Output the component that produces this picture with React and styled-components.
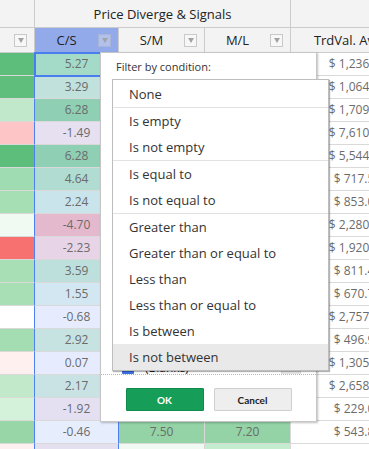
import styled, { createGlobalStyle } from 'styled-components';

const GlobalStyle = createGlobalStyle`
  html, body {
    margin: 0;
    padding: 0;
    background: #fff;
  }
  body {
    font-family: "Open Sans", "Noto Sans", sans-serif;
  }
`;

const rows = [
  { lead: '#5dbd7a', cs: '5.27', csBg: '#a4dbc8', sm: '6.10', smBg: '#a4dcb4', ml: '5.90', mlBg: '#a9dfb8', trd: '$ 1,236.54' },
  { lead: '#5fbe7c', cs: '3.29', csBg: '#c1e1dd', sm: '4.20', smBg: '#c2e8cc', ml: '3.80', mlBg: '#c2e8cc', trd: '$ 1,064.27' },
  { lead: '#c2e8cc', cs: '6.28', csBg: '#8fcfb3', sm: '5.40', smBg: '#a9dfb8', ml: '6.70', mlBg: '#99d6a8', trd: '$ 1,709.81' },
  { lead: '#fdc5c5', cs: '-1.49', csBg: '#e6e0f1', sm: '-0.80', smBg: '#fde3e3', ml: '-1.10', mlBg: '#fdd6d6', trd: '$ 7,610.32' },
  { lead: '#5dbd7a', cs: '6.28', csBg: '#8fcfb3', sm: '7.10', smBg: '#98d6a8', ml: '6.90', mlBg: '#99d6a8', trd: '$ 5,544.09' },
  { lead: '#9fdcb1', cs: '4.64', csBg: '#b0dcd1', sm: '3.90', smBg: '#c2e8cc', ml: '4.40', mlBg: '#b5e3c1', trd: '$ 717.56' },
  { lead: '#a7dfb5', cs: '2.24', csBg: '#c9e4ea', sm: '2.80', smBg: '#d4f1da', ml: '2.10', mlBg: '#d4f1da', trd: '$ 853.02' },
  { lead: '#f0faf2', cs: '-4.70', csBg: '#e5b9cd', sm: '-3.60', smBg: '#fab4b4', ml: '-4.20', mlBg: '#f9a5a5', trd: '$ 2,280.44' },
  { lead: '#f87171', cs: '-2.23', csBg: '#e7d4e7', sm: '-1.90', smBg: '#fdd6d6', ml: '-2.50', mlBg: '#fcc9c9', trd: '$ 1,920.17' },
  { lead: '#a8dfb5', cs: '3.59', csBg: '#bee0dd', sm: '3.10', smBg: '#c2e8cc', ml: '3.40', mlBg: '#c2e8cc', trd: '$ 811.43' },
  { lead: '#a8dfb5', cs: '1.55', csBg: '#d3e7f2', sm: '1.20', smBg: '#e4f6e8', ml: '1.70', mlBg: '#dcf3e1', trd: '$ 670.71' },
  { lead: '#ffffff', cs: '-0.68', csBg: '#e6ecfd', sm: '-0.40', smBg: '#fff0f0', ml: '-0.90', mlBg: '#fde6e6', trd: '$ 2,757.60' },
  { lead: '#a5ddb3', cs: '2.92', csBg: '#c6e2e1', sm: '2.60', smBg: '#d4f1da', ml: '3.00', mlBg: '#c9ebd1', trd: '$ 496.95' },
  { lead: '#fff0f0', cs: '0.07', csBg: '#e6ecfd', sm: '0.30', smBg: '#f0faf2', ml: '0.10', mlBg: '#f7fcf8', trd: '$ 1,305.38' },
  { lead: '#c3e9cb', cs: '2.17', csBg: '#c9e3e5', sm: '2.40', smBg: '#d4f1da', ml: '1.90', mlBg: '#d4f1da', trd: '$ 2,658.12' },
  { lead: '#d4f1da', cs: '-1.92', csBg: '#e4e0f1', sm: '-1.30', smBg: '#fdd6d6', ml: '-1.60', mlBg: '#fdd6d6', trd: '$ 229.06' },
  { lead: '#98d6a8', cs: '-0.46', csBg: '#e6edfd', sm: '7.50', smBg: '#93d3a5', ml: '7.20', mlBg: '#93d3a5', trd: '$ 543.85' },
  { lead: '#fff0f0', cs: '-1.65', csBg: '#e4e0f0', sm: '0.40', smBg: '#f0faf3', ml: '2.90', mlBg: '#c4ecce', trd: '$ 388.20' },
];

const conditionGroups = [
  ['None'],
  ['Is empty', 'Is not empty'],
  ['Is equal to', 'Is not equal to'],
  [
    'Greater than',
    'Greater than or equal to',
    'Less than',
    'Less than or equal to',
    'Is between',
    'Is not between',
  ],
];

const Viewport = styled.div`
  position: relative;
  width: 369px;
  height: 449px;
  overflow: hidden;
  background: #fff;
`;

const Sheet = styled.div`
  display: grid;
  grid-template-columns: 35px 84px 86px 86px 134px;
  width: max-content;
`;

const HeadCell = styled.div`
  box-sizing: border-box;
  height: ${({ $tall }) => ($tall ? '28px' : '25px')};
  display: flex;
  align-items: center;
  padding-right: 7px;
  background: ${({ $active }) => ($active ? '#93aaea' : '#f3f3f3')};
  border-right: 1px solid #cccccc;
  border-bottom: 1px solid #cccccc;
  color: #222;
  font-size: 13px;
  white-space: nowrap;
  overflow: hidden;
`;

const GroupCell = styled(HeadCell)`
  grid-column: span 3;
  justify-content: center;
  padding-right: 0;
`;

const HeadLabel = styled.span`
  flex: 1;
  text-align: center;
`;

const FilterButton = styled.span`
  box-sizing: border-box;
  flex: none;
  width: 13px;
  height: 13px;
  border: 1px solid ${({ $active }) => ($active ? '#a9b5d6' : '#c9c9c9')};
  background: ${({ $active }) => ($active ? '#b2c1ec' : '#f7f7f7')};
  display: flex;
  align-items: center;
  justify-content: center;

  &::after {
    content: '';
    border-left: 3.5px solid transparent;
    border-right: 3.5px solid transparent;
    border-top: 5px solid #a3a3a3;
    margin-top: 1px;
  }
`;

const Cell = styled.div`
  position: relative;
  box-sizing: border-box;
  height: 23px;
  line-height: 22px;
  background: ${({ $bg }) => $bg || '#fff'};
  border-right: 1px solid ${({ $edge }) => ($edge ? '#4f80f0' : '#d9d9d9')};
  border-bottom: 1px solid #d9d9d9;
  color: #6b6b6b;
  font-size: 12px;
  text-align: center;
  white-space: nowrap;
  overflow: hidden;

  &.selected {
    overflow: visible;
    z-index: 1;
    outline: 2px solid #4a7df0;
    outline-offset: -1px;
  }
`;

const Panel = styled.div`
  position: absolute;
  left: 100px;
  top: 52px;
  box-sizing: border-box;
  width: 217px;
  height: 370px;
  display: flex;
  flex-direction: column;
  background: #fff;
  border: 1px solid #c6c6c6;
  box-shadow: 1px 1px 2px rgba(0, 0, 0, 0.25);
  z-index: 2;
`;

const Caption = styled.div`
  padding: 7px 0 0 15px;
  font-size: 11px;
  line-height: 14px;
  color: #333;
`;

const ValueArea = styled.div`
  flex: 1;
  display: flex;
  align-items: flex-end;
  justify-content: space-between;
  border-bottom: 1px dotted #b5b5b5;
`;

const CheckRow = styled.div`
  display: flex;
  align-items: flex-end;
  gap: 11px;
  padding-left: 21px;
  font-size: 12px;
  line-height: 13px;
  color: #222;
`;

const CheckBox = styled.span`
  width: 12px;
  height: 12px;
  border-radius: 1px;
  background: #3a73e6;
`;

const ScrollThumb = styled.div`
  width: 18px;
  height: 30px;
  margin-right: 15px;
  background: #e6e6e6;
  border: 1px solid #dadada;
  border-bottom: none;
`;

const Footer = styled.div`
  display: flex;
  justify-content: center;
  gap: 10px;
  padding: 13px 0 10px;
`;

const Button = styled.button`
  box-sizing: border-box;
  width: 78px;
  height: 23px;
  padding: 0;
  border-radius: 1px;
  font-family: Lato, "Open Sans", sans-serif;
  font-size: 10px;
  font-weight: 700;
  border: 1px solid ${({ $primary }) => ($primary ? '#0f8c4b' : '#cfcfcf')};
  background: ${({ $primary }) => ($primary ? '#169d57' : '#eeeeee')};
  color: ${({ $primary }) => ($primary ? '#fff' : '#222')};
`;

const Menu = styled.div`
  position: absolute;
  left: 112px;
  top: 79px;
  box-sizing: border-box;
  width: 217px;
  padding: 1px 0 0;
  background: #fff;
  border: 1px solid #bdbdbd;
  box-shadow: 1px 1px 1px rgba(0, 0, 0, 0.3);
  z-index: 3;
`;

const MenuGroup = styled.div`
  & + & {
    border-top: 1px solid #e2e2e2;
  }
`;

const MenuItem = styled.div`
  height: 26px;
  line-height: 26px;
  padding-left: 16px;
  font-size: 13px;
  color: #333;
  background: ${({ $hover }) => ($hover ? '#e9e9e9' : 'transparent')};
`;

const App = () => {
  return (
    <>
      <GlobalStyle />
      <Viewport>
        <Sheet>
          <HeadCell $tall />
          <GroupCell $tall>Price Diverge &amp; Signals</GroupCell>
          <HeadCell $tall />

          <HeadCell>
            <HeadLabel />
            <FilterButton />
          </HeadCell>
          <HeadCell $active>
            <HeadLabel>C/S</HeadLabel>
            <FilterButton $active />
          </HeadCell>
          <HeadCell>
            <HeadLabel>S/M</HeadLabel>
            <FilterButton />
          </HeadCell>
          <HeadCell>
            <HeadLabel>M/L</HeadLabel>
            <FilterButton />
          </HeadCell>
          <HeadCell>
            <HeadLabel>TrdVal. Avg</HeadLabel>
            <FilterButton />
          </HeadCell>

          {rows.map((row, i) => [
            <Cell key={`a${i}`} $bg={row.lead} $edge />,
            <Cell key={`b${i}`} $bg={row.csBg} $edge className={i === 0 ? 'selected' : undefined}>
              {row.cs}
            </Cell>,
            <Cell key={`c${i}`} $bg={row.smBg}>{row.sm}</Cell>,
            <Cell key={`d${i}`} $bg={row.mlBg}>{row.ml}</Cell>,
            <Cell key={`e${i}`}>{row.trd}</Cell>,
          ])}
        </Sheet>

        <Panel>
          <Caption>Filter by condition:</Caption>
          <ValueArea>
            <CheckRow>
              <CheckBox />
              <span>(Blanks)</span>
            </CheckRow>
            <ScrollThumb />
          </ValueArea>
          <Footer>
            <Button $primary>OK</Button>
            <Button>Cancel</Button>
          </Footer>
        </Panel>

        <Menu>
          {conditionGroups.map((group) => (
            <MenuGroup key={group[0]}>
              {group.map((label) => (
                <MenuItem key={label} $hover={label === 'Is not between'}>
                  {label}
                </MenuItem>
              ))}
            </MenuGroup>
          ))}
        </Menu>
      </Viewport>
    </>
  );
};

export default App;
